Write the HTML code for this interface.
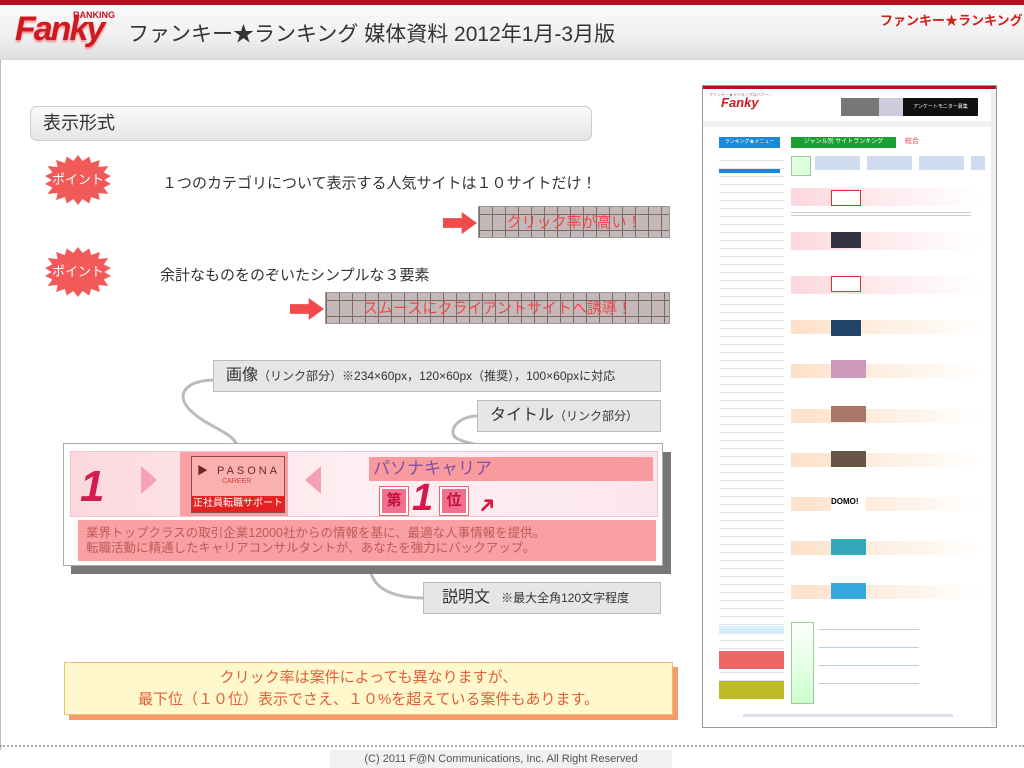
<!DOCTYPE html>
<html><head><meta charset="utf-8"><style>
*{margin:0;padding:0;box-sizing:border-box}
body{width:1024px;height:768px;overflow:hidden;background:#fff;position:relative;font-family:"Liberation Sans","Noto Sans CJK JP",sans-serif;color:#333}
.a{position:absolute}
.hdr{left:0;top:0;width:1024px;height:60px;background:linear-gradient(#fafafa,#f0f0f0 60%,#dedede);border-top:5px solid #b3111c;border-bottom:1px solid #d8d8d8}
.burst{width:66px;height:50px;background:#f25a5a;clip-path:polygon(50% 0,57% 12%,67% 3%,70% 16%,83% 10%,81% 24%,96% 22%,89% 35%,100% 42%,90% 50%,100% 58%,89% 65%,96% 78%,81% 76%,83% 90%,70% 84%,67% 97%,57% 88%,50% 100%,43% 88%,33% 97%,30% 84%,17% 90%,19% 76%,4% 78%,11% 65%,0 58%,10% 50%,0 42%,11% 35%,4% 22%,19% 24%,17% 10%,30% 16%,33% 3%,43% 12%);color:#fff;font-size:13px;text-align:center;line-height:50px}
.arrow{width:34px;height:22px;background:#f04a4a;clip-path:polygon(0 28%,55% 28%,55% 0,100% 50%,55% 100%,55% 72%,0 72%)}
.grid{background-color:#c4b8b8;background-image:linear-gradient(90deg,#7a6a6a 1px,transparent 1px),linear-gradient(#7a6a6a 1px,transparent 1px);background-size:13px 100%,100% 16px;background-position:0 0,0 7px;color:#f04848;font-size:15px;text-align:center;border:1px solid #999}
.lbl{background:#e6e6e6;border:1px solid #bbb;font-size:16px;color:#333;padding-left:12px;line-height:30px;white-space:nowrap}
.lbl small{font-size:12px}
.tb div{position:absolute}
</style></head><body>
<div class="a hdr"></div>
<div class="a" style="left:0;top:60px;width:1px;height:690px;background:#bbb"></div>
<div class="a" style="left:73px;top:10px;font:bold 9px 'Liberation Sans';color:#c2141c">RANKING</div>
<div class="a" style="left:15px;top:10px;font:italic bold 34px 'Liberation Sans';color:#d01820;letter-spacing:-2px;text-shadow:0 2px 2px #e88">Fanky</div>
<div class="a" style="left:128px;top:18px;font-size:21px;color:#333">ファンキー★ランキング 媒体資料 2012年1月-3月版</div>
<div class="a" style="left:880px;top:10px;font-size:13px;font-weight:bold;color:#d0201c">ファンキー★ランキング</div>

<div class="a" style="left:30px;top:106px;width:562px;height:35px;border:1px solid #ccc;border-radius:7px;background:linear-gradient(#fafafa,#e6e6e6);font-size:18px;line-height:33px;padding-left:12px">表示形式</div>

<div class="a burst" style="left:45px;top:155px">ポイント</div>
<div class="a" style="left:162px;top:172px;font-size:15px">１つのカテゴリについて表示する人気サイトは１０サイトだけ！</div>
<div class="a arrow" style="left:443px;top:212px"></div>
<div class="a grid" style="left:478px;top:206px;width:192px;height:32px;line-height:32px">クリック率が高い！</div>

<div class="a burst" style="left:45px;top:247px">ポイント</div>
<div class="a" style="left:160px;top:264px;font-size:15px">余計なものをのぞいたシンプルな３要素</div>
<div class="a arrow" style="left:290px;top:298px"></div>
<div class="a grid" style="left:325px;top:292px;width:345px;height:32px;line-height:32px">スムースにクライアントサイトへ誘導！</div>

<svg class="a" style="left:0;top:0" width="700" height="650"><g fill="none" stroke="#bbb" stroke-width="3">
<path d="M215 380 C185 380 175 395 190 410 C210 430 235 430 240 452"/>
<path d="M478 416 C455 416 445 435 460 440 C480 448 500 445 505 455"/>
<path d="M370 560 C368 580 380 598 425 598"/></g></svg>

<div class="a lbl" style="left:213px;top:360px;width:448px;height:32px">画像<small>（リンク部分）※234×60px，120×60px（推奨），100×60pxに対応</small></div>
<div class="a lbl" style="left:477px;top:400px;width:184px;height:32px;padding-left:12px">タイトル<small>（リンク部分）</small></div>

<div class="a" style="left:71px;top:452px;width:600px;height:122px;background:#777"></div>
<div class="a" style="left:63px;top:443px;width:600px;height:123px;background:#fff;border:1px solid #aaa"></div>
<div class="a" style="left:70px;top:451px;width:588px;height:66px;background:linear-gradient(90deg,#fcd8de,#fff0f3 50%,#fbe6ec);border:1px solid #f3c2cc"></div>
<div class="a" style="left:80px;top:462px;font:italic bold 44px 'Liberation Sans';color:#d21e4e">1</div>
<div class="a" style="left:141px;top:466px;width:16px;height:28px;background:#f5a2b6;clip-path:polygon(0 0,100% 50%,0 100%)"></div>
<div class="a" style="left:180px;top:452px;width:108px;height:64px;background:#f8a0a5"></div>
<div class="a" style="left:191px;top:456px;width:94px;height:57px;border:1px solid #8a4a4a;background:#fbb0b0"></div>
<div class="a" style="left:197px;top:462px;font-size:11px;letter-spacing:3px;color:#6a2a2a">▶ PASONA</div>
<div class="a" style="left:222px;top:478px;font-size:7px;color:#d04040">CAREER</div>
<div class="a" style="left:192px;top:496px;width:92px;height:16px;background:#e52222;color:#fff;font-size:10px;text-align:center;line-height:16px">正社員転職サポート</div>
<div class="a" style="left:305px;top:466px;width:16px;height:28px;background:#f5a2b6;clip-path:polygon(100% 0,0 50%,100% 100%)"></div>
<div class="a" style="left:369px;top:457px;width:284px;height:24px;background:#f89a9e;font-size:17px;color:#8050a0;padding-left:4px;line-height:24px">パソナキャリア</div>
<div class="a" style="left:380px;top:487px;width:28px;height:28px;background:#f07090;border:2px solid #fff;box-shadow:0 0 0 1px #e66;color:#c0103a;font-size:15px;font-weight:bold;text-align:center;line-height:24px">第</div>
<div class="a" style="left:412px;top:478px;font:italic bold 38px 'Liberation Sans';color:#d5184a;line-height:40px">1</div>
<div class="a" style="left:440px;top:487px;width:28px;height:28px;background:#f07090;border:2px solid #fff;box-shadow:0 0 0 1px #e66;color:#c0103a;font-size:15px;font-weight:bold;text-align:center;line-height:24px">位</div>
<div class="a" style="left:478px;top:492px;font-size:22px;color:#d81840;transform:rotate(-45deg)">➜</div>
<div class="a" style="left:78px;top:520px;width:578px;height:41px;background:#f8a0a3;color:#c05a5a;font-size:12.5px;line-height:15px;padding:6px 0 0 8px">業界トップクラスの取引企業12000社からの情報を基に、最適な人事情報を提供。<br>転職活動に精通したキャリアコンサルタントが、あなたを強力にバックアップ。</div>

<div class="a lbl" style="left:423px;top:582px;width:238px;height:32px;padding-left:18px">説明文 <small>&nbsp;&nbsp;※最大全角120文字程度</small></div>

<div class="a" style="left:69px;top:667px;width:609px;height:53px;background:#f59a6a"></div>
<div class="a" style="left:64px;top:662px;width:609px;height:53px;background:#fff8cc;border:1px solid #e8c070;color:#e0603a;font-size:15px;text-align:center;line-height:22px;padding-top:4px">クリック率は案件によっても異なりますが、<br>最下位（１０位）表示でさえ、１０%を超えている案件もあります。</div>

<div class="a" style="left:0;top:745px;width:1024px;border-top:2px dotted #aaa"></div>
<div class="a" style="left:330px;top:750px;width:342px;height:18px;background:#f1f1f1;font-size:11px;color:#555;text-align:center;line-height:18px;font-family:'Liberation Sans',sans-serif;white-space:nowrap">(C) 2011 F@N Communications, Inc. All Right Reserved</div>

<!-- thumbnail -->
<div class="a tb" style="left:702px;top:85px;width:295px;height:643px;border:1px solid #999;background:#fff;overflow:hidden">
<div style="left:0;top:0;width:295px;height:3px;background:#b3111c"></div>
<div style="left:6px;top:6px;font-size:4px;color:#777">ファンキー★ランキングはバナー...</div>
<div style="left:18px;top:9px;font:italic bold 13px 'Liberation Sans';color:#d01820">Fanky</div>
<div style="left:138px;top:12px;width:38px;height:18px;background:#777"></div>
<div style="left:176px;top:12px;width:24px;height:18px;background:#ccd"></div>
<div style="left:200px;top:12px;width:75px;height:18px;background:#111;color:#fff;font-size:5px;line-height:18px;text-align:center">アンケートモニター募集</div>
<div style="left:0;top:35px;width:290px;height:6px;background:#f0f0f0"></div>
<div style="left:16px;top:51px;width:61px;height:11px;background:#1a8ad8;color:#fff;font-size:5px;line-height:11px;text-align:center">ランキング★メニュー</div>
<div style="left:88px;top:51px;width:105px;height:11px;background:#18a030;color:#fff;font-size:6px;line-height:11px;text-align:center">ジャンル別 サイトランキング</div>
<div style="left:202px;top:50px;font-size:7px;color:#e44">総合</div>
<div style="left:16px;top:68px;width:65px;height:540px;background:repeating-linear-gradient(#fff 0 6px,#dce4ec 6px 7px,#fff 7px 8px)"></div>
<div style="left:16px;top:83px;width:61px;height:4px;background:#1a8ad8"></div>
<div style="left:88px;top:70px;width:20px;height:20px;background:#dfd;border:1px solid #9c9"></div>
<div style="left:112px;top:70px;width:170px;height:14px;background:repeating-linear-gradient(90deg,#cfdcf0 0 45px,#fff 45px 52px)"></div>
<div style="left:88px;top:102px;width:190px;height:18px;background:linear-gradient(90deg,#fcd8de,#fff)"></div>
<div style="left:128px;top:104px;width:30px;height:16px;background:#fff;border:1px solid #c33"></div>
<div style="left:88px;top:124px;width:180px;height:6px;background:repeating-linear-gradient(#fff 0 2px,#ccc 2px 3px)"></div>
<div style="left:88px;top:146px;width:190px;height:18px;background:linear-gradient(90deg,#fcd8de,#fff)"></div>
<div style="left:128px;top:146px;width:30px;height:16px;background:#334"></div>
<div style="left:88px;top:190px;width:190px;height:18px;background:linear-gradient(90deg,#fcd8de,#fff)"></div>
<div style="left:128px;top:190px;width:30px;height:16px;background:#fff;border:1px solid #c33"></div>
<div style="left:88px;top:234px;width:190px;height:14px;background:linear-gradient(90deg,#fde0c8,#fff)"></div>
<div style="left:128px;top:234px;width:30px;height:16px;background:#246"></div>
<div style="left:88px;top:278px;width:190px;height:14px;background:linear-gradient(90deg,#fde0c8,#fff)"></div>
<div style="left:128px;top:274px;width:35px;height:18px;background:#c9b"></div>
<div style="left:88px;top:323px;width:190px;height:14px;background:linear-gradient(90deg,#fde0c8,#fff)"></div>
<div style="left:128px;top:320px;width:35px;height:16px;background:#a76"></div>
<div style="left:88px;top:367px;width:190px;height:14px;background:linear-gradient(90deg,#fde0c8,#fff)"></div>
<div style="left:128px;top:365px;width:35px;height:16px;background:#654"></div>
<div style="left:88px;top:411px;width:190px;height:14px;background:linear-gradient(90deg,#fde0c8,#fff)"></div>
<div style="left:128px;top:411px;width:35px;height:18px;background:#fff;font:bold 8px 'Liberation Sans';color:#000">DOMO!</div>
<div style="left:88px;top:455px;width:190px;height:14px;background:linear-gradient(90deg,#fde0c8,#fff)"></div>
<div style="left:128px;top:453px;width:35px;height:16px;background:#3ab"></div>
<div style="left:88px;top:499px;width:190px;height:14px;background:linear-gradient(90deg,#fde0c8,#fff)"></div>
<div style="left:128px;top:497px;width:35px;height:16px;background:#3ad"></div>
<div style="left:88px;top:536px;width:23px;height:82px;background:linear-gradient(#fff,#cfc);border:1px solid #9c9"></div>
<div style="left:116px;top:540px;width:100px;height:70px;background:repeating-linear-gradient(#fff 0 3px,#bcd 3px 4px,#fff 4px 18px)"></div>
<div style="left:16px;top:540px;width:65px;height:8px;background:#d6ecf8"></div>
<div style="left:16px;top:565px;width:65px;height:18px;background:#e66"></div>
<div style="left:16px;top:595px;width:65px;height:18px;background:#bb2"></div>
<div style="left:40px;top:628px;width:210px;height:3px;background:#dde"></div>
<div style="left:288px;top:5px;width:6px;height:635px;background:#eee"></div>
</div>
</body></html>
